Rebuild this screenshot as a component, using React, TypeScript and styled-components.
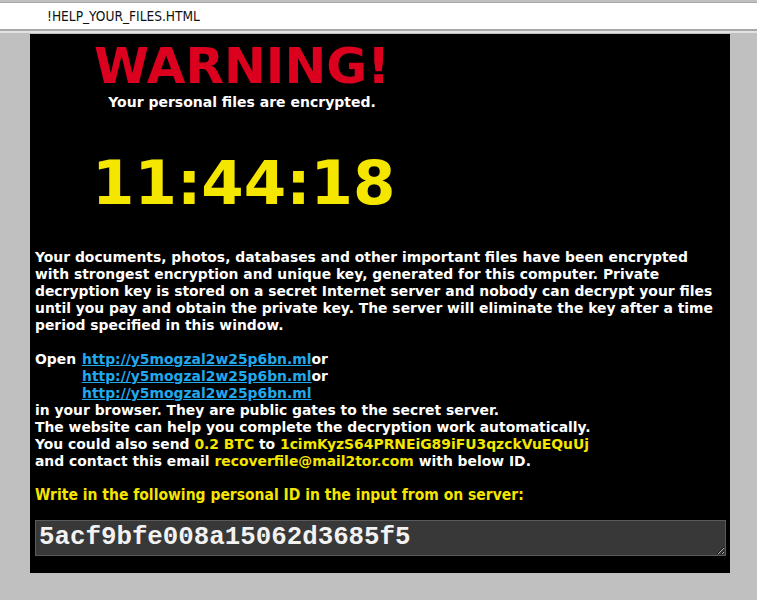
import React from "react";
import styled, { createGlobalStyle } from "styled-components";

const Global = createGlobalStyle`
  html, body { margin: 0; padding: 0; background: #c0c0c0; }
  body { width: 757px; height: 600px; overflow: hidden; }
`;

const TitleBar = styled.div`
  height: 26px;
  margin-top: 2px;
  background: #ffffff;
  border-top: 1px solid #a8a8a8;
  border-bottom: 2px solid #a8a8a8;
  display: flex;
  align-items: center;
  padding-left: 47px;
  font-family: "Liberation Sans Narrow", "DejaVu Sans Condensed", "Liberation Sans", sans-serif;
  font-size: 13.6px;
  color: #111;
`;

const Strip = styled.div`
  height: 2px;
  background: #e2e2e2;
`;

const Page = styled.div`
  padding-top: 1px;
  background: #c0c0c0;
`;

const Panel = styled.div`
  margin-left: 30px;
  width: 690px;
  height: 529px;
  padding: 0 5px 10px 5px;
  background: #000000;
  font-family: "DejaVu Sans", Verdana, sans-serif;
  font-weight: bold;
  color: #ffffff;
`;

const HeaderCol = styled.div`
  width: 300px;
  margin-left: 57px;
  padding-top: 7px;
  text-align: center;
`;

const Warning = styled.div`
  font-size: 50px;
  line-height: 50px;
  color: #db001d;
`;

const Subtitle = styled.div`
  font-size: 14px;
  line-height: 17px;
  margin-top: 3px;
`;

const Timer = styled.div`
  font-size: 61px;
  line-height: 70px;
  margin-top: 37px;
  color: #f5e600;
`;

const Body = styled.div`
  margin-top: 31px;
  font-size: 13.9px;
  line-height: 17px;
  white-space: nowrap;
`;

const Para = styled.p`
  margin: 0 0 17px 0;
`;

const OpenGrid = styled.div`
  display: grid;
  grid-template-columns: 47px auto;
`;

const Link = styled.a`
  color: #22a8ec;
  text-decoration: underline;
`;

const Hi = styled.span`
  color: #f5e600;
`;

const Prompt = styled.div`
  margin-top: 17px;
  font-family: "DejaVu Sans Condensed", "Liberation Sans Narrow", sans-serif;
  font-size: 15.5px;
  line-height: 17px;
  color: #f5e600;
`;

const IdBox = styled.textarea`
  display: block;
  box-sizing: border-box;
  margin-top: 16px;
  width: 691px;
  height: 36px;
  padding: 2px 3px;
  background: #383838;
  border: 1px solid #5a5a5a;
  color: #f2f2f2;
  font-family: "Liberation Mono", "Courier New", monospace;
  font-weight: bold;
  font-size: 25.8px;
  line-height: 30px;
  overflow: hidden;
  outline: none;
`;

const url = "http://y5mogzal2w25p6bn.ml";

export default function App() {
  return (
    <>
      <Global />
      <TitleBar>!HELP_YOUR_FILES.HTML</TitleBar>
      <Strip />
      <Page>
        <Panel>
          <HeaderCol>
            <Warning>WARNING!</Warning>
            <Subtitle>Your personal files are encrypted.</Subtitle>
            <Timer>11:44:18</Timer>
          </HeaderCol>
          <Body>
            <Para>
              Your documents, photos, databases and other important files have been encrypted
              <br />
              with strongest encryption and unique key, generated for this computer. Private
              <br />
              decryption key is stored on a secret Internet server and nobody can decrypt your files
              <br />
              until you pay and obtain the private key. The server will eliminate the key after a time
              <br />
              period specified in this window.
            </Para>
            <OpenGrid>
              <span>Open</span>
              <span>
                <Link href="#">{url}</Link>or
              </span>
              <span />
              <span>
                <Link href="#">{url}</Link>or
              </span>
              <span />
              <span>
                <Link href="#">{url}</Link>
              </span>
            </OpenGrid>
            <div>in your browser. They are public gates to the secret server.</div>
            <div>The website can help you complete the decryption work automatically.</div>
            <div>
              You could also send <Hi>0.2 BTC</Hi> to <Hi>1cimKyzS64PRNEiG89iFU3qzckVuEQuUj</Hi>
            </div>
            <div>
              and contact this email <Hi>recoverfile@mail2tor.com</Hi> with below ID.
            </div>
            <Prompt>Write in the following personal ID in the input from on server:</Prompt>
            <IdBox readOnly defaultValue="5acf9bfe008a15062d3685f5" spellCheck={false} />
          </Body>
        </Panel>
      </Page>
    </>
  );
}
